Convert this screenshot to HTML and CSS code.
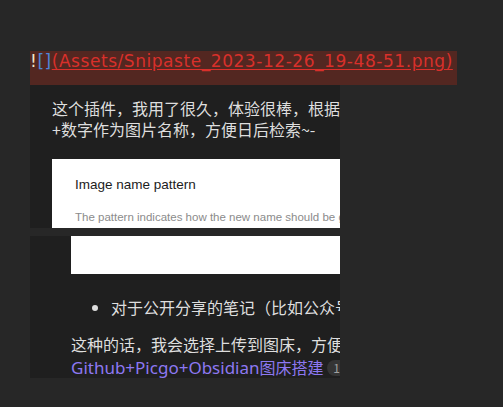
FILE: index.html
```html
<!DOCTYPE html>
<html>
<head>
<meta charset="utf-8">
<link rel="stylesheet" href="styles.css">
</head>
<body>
<div class="page">
  <div class="md-line"><span class="bang">!</span><span class="brk">[]</span><span class="url">(Assets/Snipaste_2023-12-26_19-48-51.png)</span></div>
  <div class="panel panel-top">
    <p class="para">这个插件，我用了很久，体验很棒，根据规则<br>+数字作为图片名称，方便日后检索~-</p>
    <div class="shot shot-1">
      <div class="shot-title">Image name pattern</div>
      <div class="shot-desc">The pattern indicates how the new name should be generated.</div>
    </div>
  </div>
  <div class="panel panel-bottom">
    <div class="shot shot-2"></div>
    <ul class="list">
      <li>对于公开分享的笔记（比如公众号文章）</li>
    </ul>
    <p class="para para-2">这种的话，我会选择上传到图床，方便分享<br><a class="link">Github+Picgo+Obsidian<span class="cjk">图床搭建</span></a> <span class="badge">10</span></p>
  </div>
</div>
</body>
</html>
```
FILE: styles.css
```css
html, body {
  margin: 0;
  padding: 0;
  background: #272727;
}
.page {
  padding: 51px 0 0 30px;
  font-family: "Noto Sans", "Noto Sans CJK SC", sans-serif;
}
.md-line {
  width: 427px;
  height: 34px;
  background: #532721;
  font-family: "DejaVu Sans", sans-serif;
  font-size: 17px;
  line-height: 20px;
  letter-spacing: 0.55px;
  white-space: nowrap;
  overflow: hidden;
}
.bang { color: #f2e6c8; }
.brk { color: #4f86d8; }
.url { color: #d9302b; text-decoration: underline; text-underline-offset: 2px; }
.panel {
  width: 310px;
  background: #1f1f1f;
  overflow: hidden;
  white-space: nowrap;
}
.panel-top {
  height: 143px;
  padding-top: 13px;
  padding-left: 22px;
  box-sizing: border-box;
}
.para {
  margin: 0;
  color: #dedede;
  font-family: "Noto Sans CJK SC", sans-serif;
  font-size: 16px;
  line-height: 21px;
}
.shot {
  background: #ffffff;
}
.shot-1 {
  margin-top: 19px;
  height: 69px;
  padding: 16px 0 0 23px;
  box-sizing: border-box;
}
.shot-title {
  color: #1c1c1c;
  font-size: 13.5px;
  line-height: 20px;
  font-family: "Liberation Sans", sans-serif;
}
.shot-desc {
  margin-top: 14px;
  color: #8b8b8b;
  font-size: 11.5px;
  line-height: 16px;
  font-family: "Liberation Sans", sans-serif;
}
.panel-bottom {
  margin-top: 8px;
  height: 142px;
  padding-left: 41px;
  box-sizing: border-box;
}
.shot-2 {
  height: 38px;
}
.list {
  margin: 21px 0 0 0;
  padding: 0 0 0 40px;
  color: #dedede;
  font-family: "Noto Sans CJK SC", sans-serif;
  font-size: 16px;
  line-height: 24px;
}
.para-2 {
  margin-top: 14px;
  line-height: 23px;
}
.link {
  color: #8d78f2;
  font-family: "Noto Sans", "Noto Sans CJK SC", sans-serif;
  font-size: 17px;
}
.link .cjk {
  font-family: "Noto Sans CJK SC", sans-serif;
  font-size: 16px;
}
.badge {
  display: inline-block;
  background: #343434;
  color: #a0a0a0;
  border-radius: 8px;
  font-size: 12px;
  line-height: 16px;
  padding: 0 6px;
  vertical-align: 1px;
}
```
